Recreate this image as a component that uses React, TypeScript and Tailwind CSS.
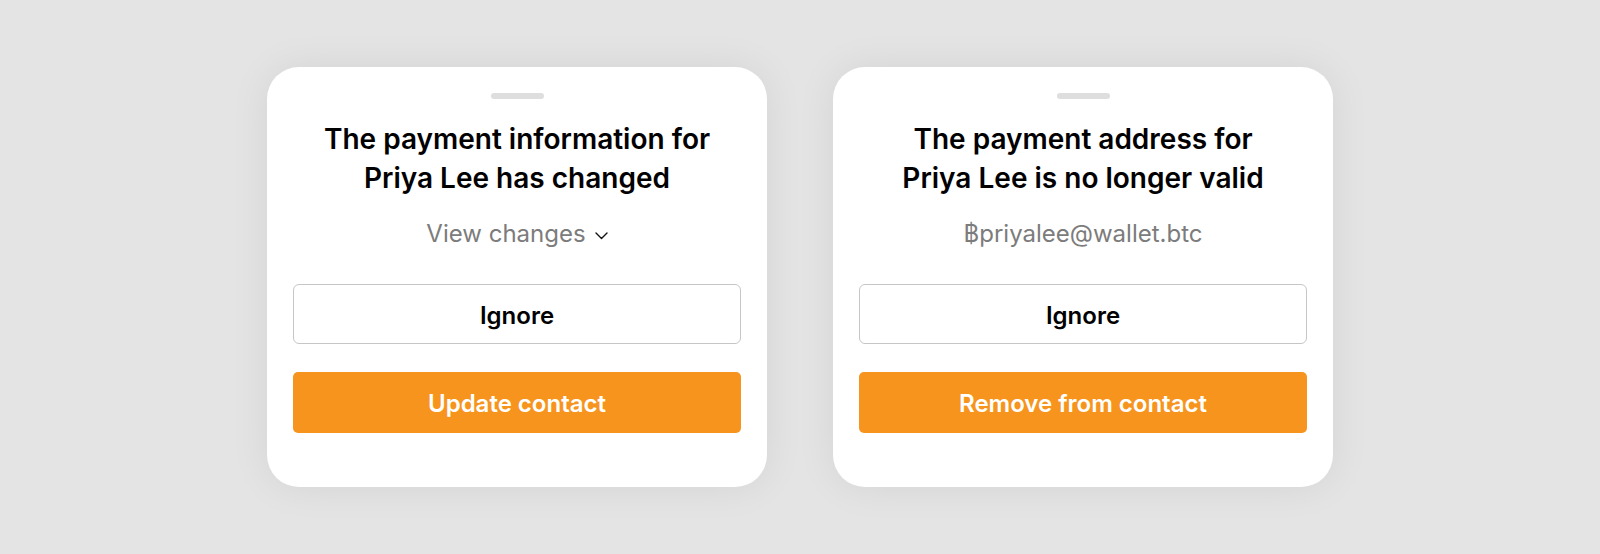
import React from "react";

interface AlertCardProps {
  title: [string, string];
  detail: React.ReactNode;
  action: string;
}

const ChevronDown = () => (
  <svg width="13" height="8" viewBox="0 0 13 8" fill="none" className="ml-[9px] mt-[3px]">
    <path d="M1 1l5.5 5.5L12 1" stroke="#111" strokeWidth="1.4" strokeLinecap="round" strokeLinejoin="round" />
  </svg>
);

const AlertCard = ({ title, detail, action }: AlertCardProps) => (
  <div className="w-[500px] h-[420px] rounded-[32px] bg-white shadow-[0_0_40px_rgba(0,0,0,0.07)] flex flex-col items-center px-[26px] pt-[26px]">
    <div className="w-[53px] h-[6px] rounded-full bg-[#dedede]" />
    <h2 className="mt-[21px] text-center text-[28px] leading-[39px] font-semibold text-black">
      {title[0]}
      <br />
      {title[1]}
    </h2>
    <div className="mt-[19px] h-[34px] flex items-center text-[24px] font-normal text-[#7c7c7c]">{detail}</div>
    <div className="mt-[33px] w-full flex flex-col gap-[28px]">
      <button className="h-[60px] w-full pt-[3px] rounded-[6px] border border-[#c6c6c6] bg-white text-[24px] font-semibold text-black">
        Ignore
      </button>
      <button className="h-[61px] w-full pt-[3px] rounded-[5px] bg-[#f7941d] text-[24px] font-semibold text-white">
        {action}
      </button>
    </div>
  </div>
);

export default function App() {
  return (
    <div
      className="w-full h-[554px] bg-[#e4e4e4] flex items-center justify-center gap-[66px]"
      style={{ fontFamily: "Inter, 'Noto Sans', sans-serif" }}
    >
      <AlertCard
        title={["The payment information for", "Priya Lee has changed"]}
        detail={
          <>
            <span>View changes</span>
            <ChevronDown />
          </>
        }
        action="Update contact"
      />
      <AlertCard
        title={["The payment address for", "Priya Lee is no longer valid"]}
        detail={<span>฿priyalee@wallet.btc</span>}
        action="Remove from contact"
      />
    </div>
  );
}
